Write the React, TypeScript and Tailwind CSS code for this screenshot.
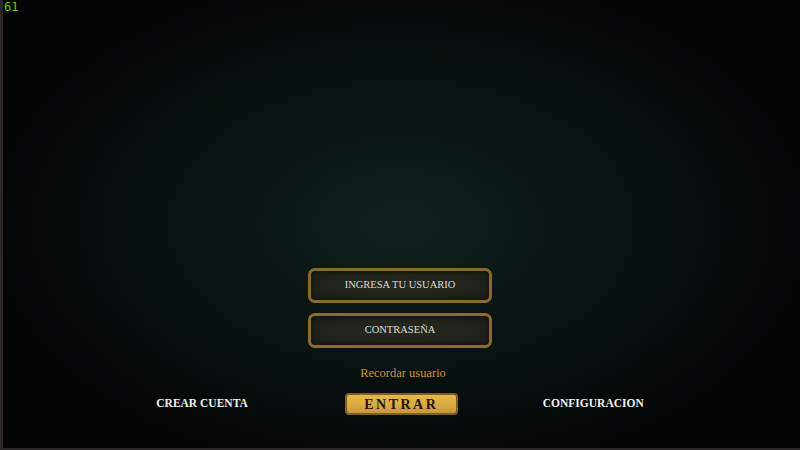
import React from "react";

function Field({ label }: { label: string }) {
  return (
    <div className="flex h-[35px] w-[184px] items-center justify-center rounded-[7px] border-[3px] border-[#8c6a2c] bg-[radial-gradient(ellipse_at_center,#262a20_0%,#1c1f18_100%)] shadow-[inset_0_0_6px_rgba(0,0,0,0.6)]">
      <span className="text-[10.5px] tracking-[0px] text-[#dcdcd6] [font-family:'Liberation_Serif',serif]">
        {label}
      </span>
    </div>
  );
}

export default function App() {
  return (
    <div className="relative flex h-[450px] w-[800px] flex-col border-b-2 border-l-[3px] border-[#2b2727] bg-[radial-gradient(ellipse_420px_260px_at_50%_50%,#0f211d_0%,#0a1513_45%,#030505_100%)]">
      <span className="absolute left-[1px] top-[1px] text-[12px] leading-none text-[#66cc00] [font-family:'DejaVu_Sans_Mono',monospace]">
        61
      </span>

      <div className="mt-auto flex flex-col items-center pb-[33px]">
        <div className="ml-[-3px] flex flex-col items-center gap-[10px]">
          <Field label="INGRESA TU USUARIO" />
          <Field label="CONTRASEÑA" />
        </div>

        <span className="mt-[19px] ml-[3px] text-[12.5px] leading-none text-[#c9953e] [font-family:'Liberation_Serif',serif]">
          Recordar usuario
        </span>

        <div className="mt-[14px] ml-[-3px] flex items-center">
          <span className="mr-[97px] text-[11.5px] font-bold text-[#f2f2ee] [font-family:'Liberation_Serif',serif]">
            CREAR CUENTA
          </span>
          <button className="flex h-[22px] w-[113px] items-center justify-center rounded-[4px] border-2 border-[#7d5f24] bg-[linear-gradient(180deg,#e6b850_0%,#d9a840_60%,#c8963a_100%)]">
            <span className="text-[14px] font-bold tracking-[2.5px] text-[#241808] [font-family:'Liberation_Serif',serif]">
              ENTRAR
            </span>
          </button>
          <span className="ml-[85px] text-[11.5px] font-bold text-[#f2f2ee] [font-family:'Liberation_Serif',serif]">
            CONFIGURACION
          </span>
        </div>
      </div>
    </div>
  );
}
